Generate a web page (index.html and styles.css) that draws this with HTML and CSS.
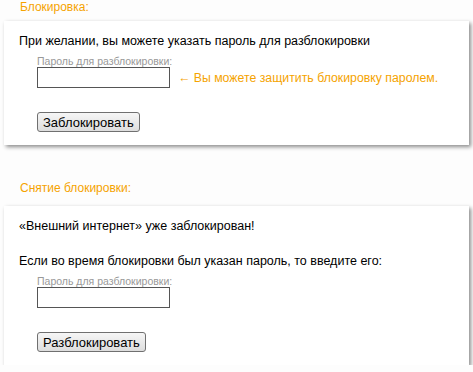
FILE: index.html
```html
<!DOCTYPE html>
<html lang="ru">

<head>
    <meta charset="UTF-8">
    <title>Блокировка</title>
    <link rel="stylesheet" href="styles.css">
</head>

<body>
    <h2 class="section-title">Блокировка:</h2>
    <form class="card" action="">
        <p class="card-text">При желании, вы можете указать пароль для разблокировки</p>
        <div class="field">
            <label for="lock-pass">Пароль для разблокировки:</label>
            <div class="field-row">
                <input type="password" id="lock-pass" name="lock-pass">
                <span class="hint">← Вы можете защитить блокировку паролем.</span>
            </div>
        </div>
        <button type="submit">Заблокировать</button>
    </form>

    <h2 class="section-title second">Снятие блокировки:</h2>
    <form class="card" action="">
        <p class="card-text">«Внешний интернет» уже заблокирован!</p>
        <p class="card-text">Если во время блокировки был указан пароль, то введите его:</p>
        <div class="field">
            <label for="unlock-pass">Пароль для разблокировки:</label>
            <div class="field-row">
                <input type="password" id="unlock-pass" name="unlock-pass">
            </div>
        </div>
        <button type="submit">Разблокировать</button>
    </form>
</body>

</html>
```

FILE: styles.css
```css
body {
    margin: 0;
    padding: 0 4px;
    background-color: #fdfdfd;
    font-family: "Liberation Sans", Arial, sans-serif;
    color: #000;
}

.section-title {
    margin: 0 0 7px 16px;
    font-size: 12px;
    font-weight: normal;
    line-height: 14px;
    color: #f5a300;
}

.section-title.second {
    margin-top: 36px;
    margin-bottom: 11px;
}

.card {
    display: flex;
    flex-direction: column;
    align-items: flex-start;
    width: 465px;
    box-sizing: border-box;
    padding: 13px 15px 13px 15px;
    background: white;
    box-shadow: 2px 2px 4px rgba(0, 0, 0, 0.45);
}

.card-text {
    margin: 0 0 6px;
    font-size: 12.5px;
    line-height: 15px;
}

.card-text + .card-text {
    margin-top: 14px;
}

.field {
    display: flex;
    flex-direction: column;
    margin-left: 18px;
}

.field label {
    font-size: 10.5px;
    line-height: 12px;
    color: #999;
}

.field-row {
    display: flex;
    align-items: center;
    gap: 8px;
}

.field input {
    width: 133px;
    height: 21px;
    box-sizing: border-box;
    margin: 0;
    border: 1px solid #555;
    border-radius: 0;
    background: white;
}

.hint {
    font-size: 12.3px;
    color: #f5a300;
}

button {
    margin: 24px 0 0 18px;
    padding: 1px 5px;
    height: 20px;
    font-family: "Liberation Sans", Arial, sans-serif;
    font-size: 13px;
    color: #000;
    border: 1px solid #707070;
    border-radius: 3px;
    background: linear-gradient(#f6f6f6, #dddddd);
}
```
